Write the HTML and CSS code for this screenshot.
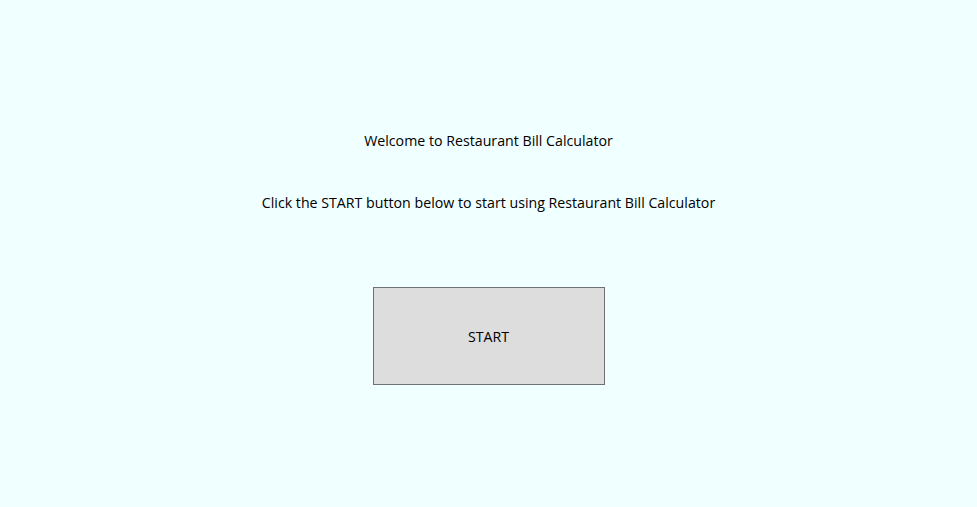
FILE: index.html
```html
<!DOCTYPE html>
<html>
<head>
<meta charset="utf-8">
<link rel="stylesheet" href="styles.css">
</head>
<body>
<main class="page">
  <p class="title">Welcome to Restaurant Bill Calculator</p>
  <p class="hint">Click the START button below to start using Restaurant Bill Calculator</p>
  <button class="start">START</button>
</main>
</body>
</html>
```

FILE: styles.css
```css
html, body {
  margin: 0;
  padding: 0;
  background: #F0FFFF;
}
.page {
  width: 977px;
  height: 507px;
  display: flex;
  flex-direction: column;
  align-items: center;
  font-family: "Open Sans", "Noto Sans", sans-serif;
  font-size: 14.2px;
  color: #000;
}
.title {
  margin: 131px 0 0 0;
  line-height: 20px;
}
.hint {
  margin: 42px 0 0 0;
  line-height: 20px;
}
.start {
  margin-top: 74px;
  width: 232px;
  height: 98px;
  background: #DDDDDD;
  border: 1px solid #707070;
  border-radius: 0;
  font-family: inherit;
  font-size: 14.2px;
  color: #000;
  padding: 0;
}
```
